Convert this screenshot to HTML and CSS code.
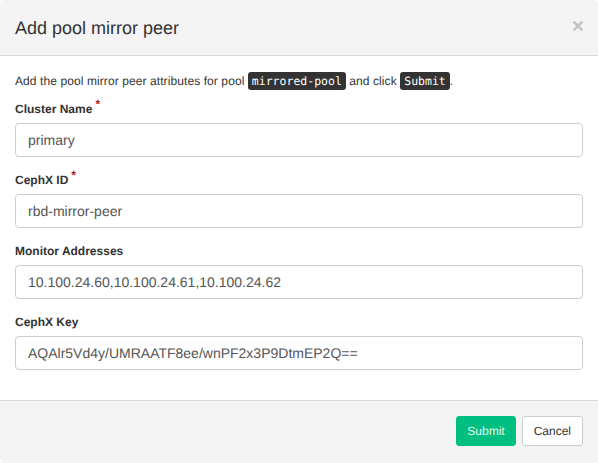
FILE: index.html
```html
<!DOCTYPE html>
<html>
<head>
<meta charset="utf-8">
<link rel="stylesheet" href="styles.css">
</head>
<body>
<div class="modal">
  <div class="modal-header">
    <h4 class="modal-title">Add pool mirror peer</h4>
    <span class="close">×</span>
  </div>
  <div class="modal-body">
    <p class="intro">Add the pool mirror peer attributes for pool <kbd>mirrored-pool</kbd> and click <kbd>Submit</kbd>.</p>
    <div class="form-group">
      <label class="label required">Cluster Name</label>
      <input class="form-control" type="text" value="primary">
    </div>
    <div class="form-group">
      <label class="label required">CephX ID</label>
      <input class="form-control" type="text" value="rbd-mirror-peer">
    </div>
    <div class="form-group">
      <label class="label">Monitor Addresses</label>
      <input class="form-control" type="text" value="10.100.24.60,10.100.24.61,10.100.24.62">
    </div>
    <div class="form-group">
      <label class="label">CephX Key</label>
      <input class="form-control" type="text" value="AQAlr5Vd4y/UMRAATF8ee/wnPF2x3P9DtmEP2Q==">
    </div>
  </div>
  <div class="modal-footer">
    <button class="btn btn-primary">Submit</button>
    <button class="btn btn-default">Cancel</button>
  </div>
</div>
</body>
</html>
```
FILE: styles.css
```css
html, body {
  margin: 0;
  padding: 0;
  background: #fff;
}
body {
  font-family: "Liberation Sans", Arial, sans-serif;
  font-size: 12px;
  color: #333;
  text-rendering: geometricPrecision;
}
.modal {
  width: 598px;
  height: 463px;
  box-sizing: border-box;
  border-radius: 4px;
  overflow: hidden;
  background: #fff;
  display: flex;
  flex-direction: column;
}
.modal-header {
  background: #f4f4f4;
  border-bottom: 1px solid #d9d9d9;
  padding: 15px 15px 14px 15px;
  height: 26px;
  display: flex;
  align-items: center;
  justify-content: space-between;
}
.modal-title {
  margin: 0;
  font-size: 18px;
  font-weight: normal;
  line-height: 26px;
  color: #333;
}
.close {
  font-size: 21px;
  font-weight: bold;
  line-height: 1;
  color: #000;
  opacity: 0.2;
  margin-right: -1px;
  margin-top: -3px;
}
.modal-body {
  padding: 15px;
  flex: 1;
}
.intro {
  margin: 0 0 10px 0;
  line-height: 20px;
  font-size: 12px;
  letter-spacing: 0.09px;
}
kbd {
  font-family: "DejaVu Sans Mono", "Liberation Mono", monospace;
  font-size: 11.5px;
  letter-spacing: 0;
  background: #333;
  color: #fff;
  border-radius: 3px;
  padding: 2px 4px;
}
.form-group {
  margin-bottom: 15px;
}
.label {
  display: block;
  font-weight: bold;
  font-size: 12px;
  line-height: 17px;
  margin-bottom: 5px;
  margin-top: 0;
}
.required::after {
  content: "*";
  color: #b52020;
  font-size: 12px;
  vertical-align: 5px;
  margin-left: 3px;
  line-height: 0;
}
.form-control {
  display: block;
  box-sizing: border-box;
  width: 100%;
  height: 34px;
  padding: 6px 12px;
  font-family: "Liberation Sans", Arial, sans-serif;
  font-size: 14px;
  color: #555;
  background: #fff;
  border: 1px solid #ccc;
  border-radius: 4px;
  margin: 0;
  text-rendering: geometricPrecision;
}
.modal-footer {
  background: #f4f4f4;
  border-top: 1px solid #d9d9d9;
  padding: 15px;
  display: flex;
  justify-content: flex-end;
  gap: 6px;
  height: 32px;
}
.btn {
  font-family: "Liberation Sans", Arial, sans-serif;
  font-size: 12px;
  line-height: 18px;
  padding: 5px 10px;
  height: 30px;
  border-radius: 3px;
  border: 1px solid transparent;
  cursor: pointer;
  text-rendering: geometricPrecision;
}
.btn-primary {
  background: #00bf80;
  border-color: #00bf80;
  color: #e3f7ee;
}
.btn-default {
  background: #fff;
  border-color: #ccc;
  color: #333;
  padding: 5px 11px;
}
```
